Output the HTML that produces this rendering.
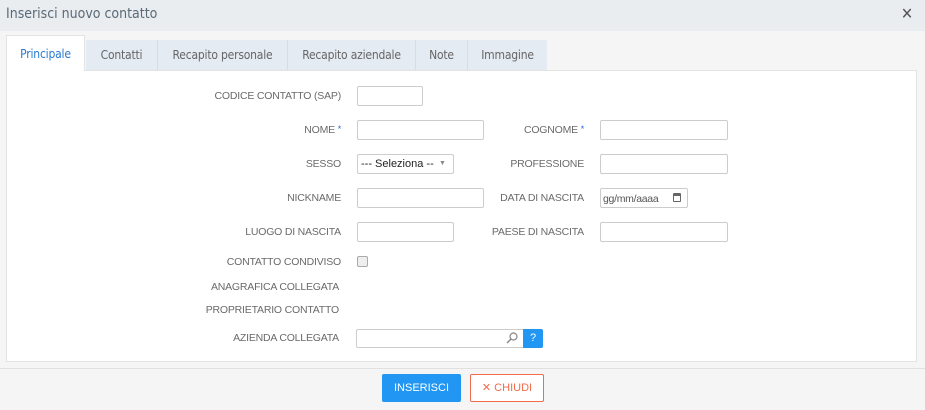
<!DOCTYPE html><html><head><style>
body{margin:0;width:925px;height:410px;background:#f5f5f5;font-family:"Liberation Sans",sans-serif;position:relative;overflow:hidden}
.a{position:absolute}
.hdr{left:0;top:0;width:925px;height:31px;background:#e9edf0;font-family:"DejaVu Sans Condensed","Liberation Sans Narrow","Liberation Sans",sans-serif;font-size:14px;color:#5a6a78}
.tab{top:40px;height:30px;background:#e4ebf2;border-right:1px solid #d6dde3;font-family:"DejaVu Sans Condensed","Liberation Sans Narrow",sans-serif;font-size:12px;color:#666;line-height:30px;text-align:center;letter-spacing:-0.2px}
.lbl{font-size:10.5px;color:#6a6a6a;text-align:right;width:300px;letter-spacing:-0.2px}
.in{background:#fff;border:1px solid #ccc;border-radius:2px;box-sizing:border-box}
.rq{color:#2a6ad8;font-size:9px;vertical-align:top}
</style></head><body>
<div class="a hdr"><span class="a" style="left:6px;top:6px">Inserisci nuovo contatto</span><span class="a" style="left:901px;top:4px;font-size:16px;color:#555">✕</span></div>
<div class="a" style="left:6px;top:70px;width:911px;height:292px;background:#fff;border:1px solid #e3e3e3;box-sizing:border-box"></div>
<div class="a" style="left:0;top:368px;width:925px;height:1px;background:#e0e0e0"></div>
<div class="a tab" style="left:6px;top:35px;height:36px;width:79px;background:#fff;border:1px solid #e3e3e3;border-bottom:none;box-sizing:border-box;color:#2a7ad0;line-height:36px">Principale</div>
<div class="a tab" style="left:86px;width:71px">Contatti</div>
<div class="a tab" style="left:158px;width:129px">Recapito personale</div>
<div class="a tab" style="left:288px;width:127px">Recapito aziendale</div>
<div class="a tab" style="left:416px;width:51px">Note</div>
<div class="a tab" style="left:468px;width:79px;border-right:none">Immagine</div>

<div class="a lbl" style="left:41px;top:90px">CODICE CONTATTO (SAP)</div>
<div class="a in" style="left:357px;top:86px;width:66px;height:20px"></div>
<div class="a lbl" style="left:41px;top:124px">NOME <span class="rq">*</span></div>
<div class="a in" style="left:357px;top:120px;width:127px;height:20px"></div>
<div class="a lbl" style="left:284px;top:124px">COGNOME <span class="rq">*</span></div>
<div class="a in" style="left:600px;top:120px;width:128px;height:20px"></div>
<div class="a lbl" style="left:41px;top:158px">SESSO</div>
<div class="a in" style="left:357px;top:154px;width:97px;height:20px;font-size:11px;color:#222;padding:3px 0 0 3px">--- Seleziona --<span class="a" style="left:81px;top:5px;font-size:7px;color:#888">▼</span></div>
<div class="a lbl" style="left:284px;top:158px">PROFESSIONE</div>
<div class="a in" style="left:600px;top:154px;width:128px;height:20px"></div>
<div class="a lbl" style="left:41px;top:192px">NICKNAME</div>
<div class="a in" style="left:357px;top:188px;width:127px;height:20px"></div>
<div class="a lbl" style="left:284px;top:192px">DATA DI NASCITA</div>
<div class="a in" style="left:600px;top:188px;width:88px;height:20px;font-size:10.5px;color:#555;padding:4px 0 0 2px;letter-spacing:-0.3px">gg/mm/aaaa<span class="a" style="left:72px;top:4px;width:8px;height:9px;border:1.5px solid #666;border-top-width:3px;box-sizing:border-box;border-radius:1px"></span></div>
<div class="a lbl" style="left:41px;top:226px">LUOGO DI NASCITA</div>
<div class="a in" style="left:357px;top:222px;width:97px;height:20px"></div>
<div class="a lbl" style="left:284px;top:226px">PAESE DI NASCITA</div>
<div class="a in" style="left:600px;top:222px;width:128px;height:20px"></div>
<div class="a lbl" style="left:41px;top:256px">CONTATTO CONDIVISO</div>
<div class="a" style="left:357px;top:256px;width:11px;height:11px;border:1px solid #aaa;border-radius:2px;background:#eee;box-sizing:border-box"></div>
<div class="a lbl" style="left:39px;top:281px">ANAGRAFICA COLLEGATA</div>
<div class="a lbl" style="left:39px;top:304px">PROPRIETARIO CONTATTO</div>
<div class="a lbl" style="left:39px;top:332px">AZIENDA COLLEGATA</div>
<div class="a in" style="left:356px;top:329px;width:187px;height:19px"></div>
<svg class="a" style="left:506px;top:332px" width="12" height="12"><circle cx="7.5" cy="4.5" r="3.5" fill="none" stroke="#888" stroke-width="1.2"/><line x1="5" y1="7" x2="1" y2="11" stroke="#888" stroke-width="1.5"/></svg>
<div class="a" style="left:523px;top:329px;width:20px;height:19px;background:#2196f3;color:#fff;font-size:11px;text-align:center;line-height:19px;border-radius:0 2px 2px 0">?</div>
<div class="a" style="left:382px;top:374px;width:79px;height:28px;background:#2196f3;border-radius:2px;color:#fff;font-size:11px;text-align:center;line-height:28px">INSERISCI</div>
<div class="a" style="left:470px;top:374px;width:74px;height:28px;background:#fff;border:1px solid #f26b4a;border-radius:2px;box-sizing:border-box;color:#f26b4a;font-size:11px;text-align:center;line-height:26px">✕ CHIUDI</div>
</body></html>
